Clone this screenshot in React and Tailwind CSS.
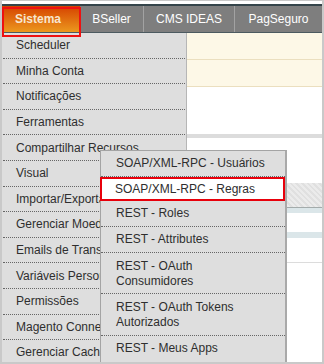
import React from 'react';

const leftItems = [
  'Scheduler',
  'Minha Conta',
  'Notificações',
  'Ferramentas',
  'Compartilhar Recursos',
  'Visual',
  'Importar/Exportar',
  'Gerenciar Moedas',
  'Emails de Transação',
  'Variáveis Personalizadas',
  'Permissões',
  'Magento Connect',
  'Gerenciar Cache',
];

const App = () => {
  return (
    <div className="w-[324px] h-[364px] border-x-2 border-b-2 border-t border-[#c9c9c9] font-['Liberation_Sans',Arial,sans-serif] text-[12px]">
      <div className="relative w-full h-full bg-white flex flex-col overflow-hidden">
        <div className="h-[3px] bg-white" />
        <div className="h-[2px] bg-[#34444a]" />

        {/* top nav */}
        <div className="h-[27px] bg-[#7e7e7e] border-b border-[#4c5a60] flex text-white">
          <div className="w-[78px] flex items-center pl-[13px] font-bold text-[#f7e6cf] bg-[linear-gradient(#d54200,#ec981e)]">
            Sistema
          </div>
          <div className="w-[63px] flex items-center justify-center">BSeller</div>
          <div className="w-[91px] flex items-center justify-center border-l border-[#a2a2a2]">CMS IDEAS</div>
          <div className="flex-1 flex items-center justify-center border-l border-[#a2a2a2]">PagSeguro</div>
        </div>

        {/* page content behind the menu */}
        <div className="flex-1 flex flex-col">
          <div className="h-[27px] bg-[#fdf8e7] border-b border-[#ebdfbf]" />
          <div className="h-[27px] bg-[#fdf8e7] border-b border-[#ebdfbf]" />
          <div className="h-[47px]" />
          <div className="h-[4px] bg-[#dcdcdc]" />
          <div className="h-[45px]" />
          <div className="h-[25px] border-b border-[#a3abab] bg-[repeating-linear-gradient(45deg,#e0e0e0_0px,#e0e0e0_2px,#ebebeb_2px,#ebebeb_4px)]" />
          <div className="h-[5px] bg-[#dbe6e9]" />
          <div className="h-[19px]" />
          <div className="h-[6px] bg-[#dbe6e9]" />
          <div className="h-[25px] border-b border-[#dcdcdc]" />
          <div className="flex-1" />
        </div>

        {/* dropdown menu */}
        <div className="absolute left-0 top-[32px] bottom-0 w-[185px] bg-[#dedede] border-r border-[#b6b6b6] text-[#2e2e2e]">
          {leftItems.map((item) => (
            <div
              key={item}
              className="h-[25.6px] mx-[1px] flex items-center pl-[13px] border-b border-dotted border-[#666666] whitespace-nowrap overflow-hidden"
            >
              {item}
            </div>
          ))}
        </div>

        {/* submenu */}
        <div className="absolute left-[98px] top-[149px] bottom-0 w-[187px] bg-[#dedede] border-l border-t border-[#a4a4a4] border-r-2 border-r-[#a9a9a9] text-[#2e2e2e] leading-[15px]">
          <div className="py-[5px] pl-[15px] border-b border-dotted border-[#666666]">SOAP/XML-RPC - Usuários</div>
          <div className="h-[24px] flex items-center pl-[13px] bg-white border-2 border-[#e8000b] -ml-[1px]">SOAP/XML-RPC - Regras</div>
          <div className="py-[5px] pl-[15px] border-b border-dotted border-[#666666]">REST - Roles</div>
          <div className="py-[5px] pl-[15px] border-b border-dotted border-[#666666]">REST - Attributes</div>
          <div className="pt-[6px] pb-[4px] pl-[15px] border-b border-dotted border-[#666666]">
            REST - OAuth
            <br />
            Consumidores
          </div>
          <div className="pt-[6px] pb-[5px] pl-[15px] border-b border-dotted border-[#666666]">
            REST - OAuth Tokens
            <br />
            Autorizados
          </div>
          <div className="py-[5px] pl-[15px]">REST - Meus Apps</div>
        </div>

        {/* highlight around Sistema */}
        <div className="absolute left-0 top-[6px] w-[79px] h-[30px] border-2 border-[#ee1111]" />
      </div>
    </div>
  );
};

export default App;
